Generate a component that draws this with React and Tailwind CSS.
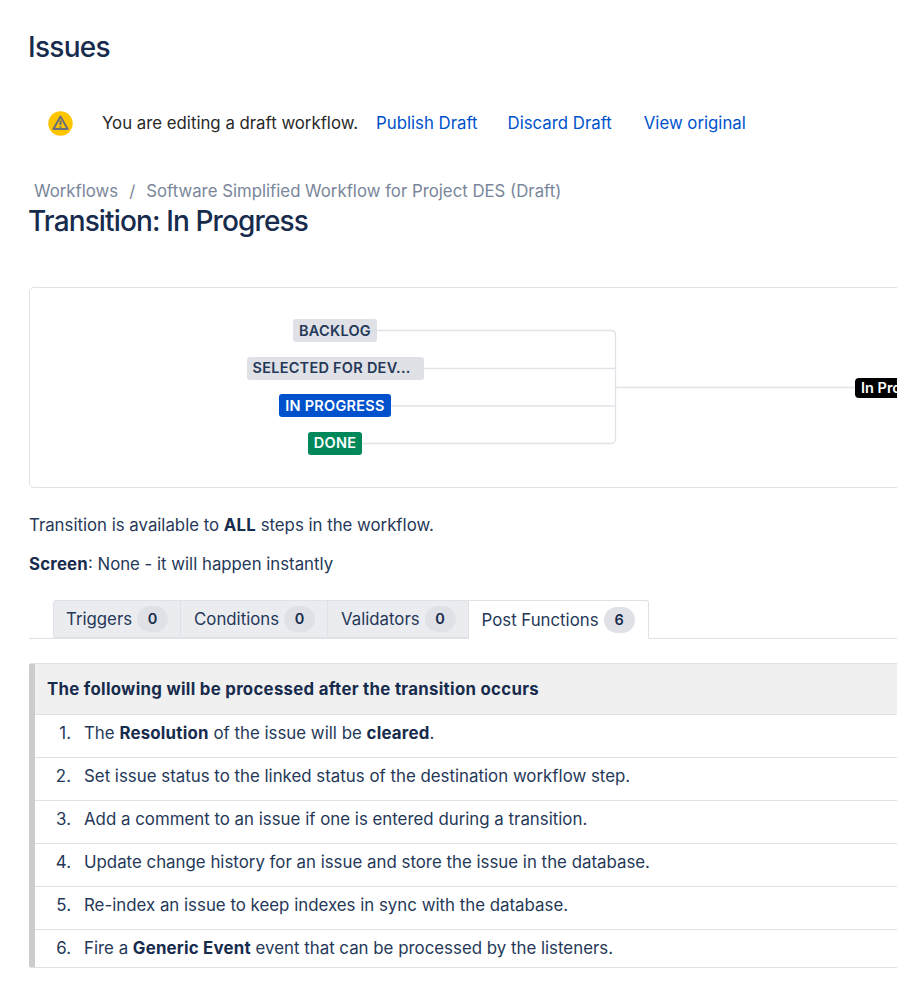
import React from 'react';

const tabs = [
  { name: 'Triggers', count: 0 },
  { name: 'Conditions', count: 0 },
  { name: 'Validators', count: 0 },
];

const Count = ({ value }) => (
  <span className="w-[31px] h-[26px] rounded-full bg-[#dfe1e6] flex items-center justify-center text-[14.5px] font-semibold text-[#172b4d]">{value}</span>
);

const Tab = ({ name, count }) => (
  <div className="h-[38px] flex items-center gap-[5px] pl-[13px] pr-[12px] first:pl-[12px] bg-[#ebecf0] border border-[#dfe1e6] border-l-0 first:border-l first:rounded-tl-[3px] text-[#253858]">
    <span className="pt-[2px]">{name}</span>
    <Count value={count} />
  </div>
);

const Strong = ({ children }) => (
  <b className="font-bold tracking-[0.2px] text-[#172b4d]">{children}</b>
);

const Row = ({ n, children, last }) => (
  <div className={last ? 'flex items-center h-[37px] text-[16.85px] text-[#253858]' : 'flex items-center h-[43px] pb-[4px] text-[16.85px] text-[#253858] border-b border-[#dfe1e6]'}>
    <span className="w-[36px] text-right shrink-0">{n}.</span>
    <span className="ml-[13px]">{children}</span>
  </div>
);

const StatusBadge = ({ className, children }) => (
  <span className={`relative h-[23px] flex items-center px-[6px] rounded-[3px] text-[14.5px] font-semibold tracking-[0.25px] ${className}`}>
    {children}
  </span>
);

export default function App() {
  return (
    <div className="w-[897px] h-[998px] overflow-hidden bg-white text-[16.8px] font-['Inter','Liberation_Sans',sans-serif]">
      <div className="pl-[29px]">
        <h1 className="-ml-px pt-[30px] text-[28px] leading-[35px] font-medium tracking-[-0.7px] text-[#172b4d]">Issues</h1>

        <div className="flex items-center mt-[28px] h-[60px] text-[#292929]">
          <svg width="25" height="25" viewBox="0 0 25 25" className="ml-[19px] shrink-0">
            <circle cx="12.5" cy="12.5" r="12.2" fill="#ffc400" />
            <path d="M12.5 5.5 L19.6 18 H5.4 Z" fill="none" stroke="#6b6f7a" strokeWidth="2" strokeLinejoin="round" />
            <path d="M12.5 9.5 V14" stroke="#6b6f7a" strokeWidth="2" />
            <circle cx="12.5" cy="16" r="1.1" fill="#6b6f7a" />
          </svg>
          <span className="ml-[29px] pt-[2px]">You are editing a draft workflow.</span>
          <a className="ml-[18px] pt-[2px] text-[#0052cc]">Publish Draft</a>
          <a className="ml-[30px] pt-[2px] text-[#0052cc]">Discard Draft</a>
          <a className="ml-[32px] pt-[2px] text-[#0052cc]">View original</a>
        </div>

        <div className="mt-[26px] ml-[5px] leading-[24px] text-[#7a869a]">
          <span>Workflows</span>
          <span className="mx-[11px]">/</span>
          <span>Software Simplified Workflow for Project DES (Draft)</span>
        </div>
        <h2 className="-ml-px mt-[1px] text-[28px] leading-[35px] font-medium tracking-[-0.87px] text-[#172b4d]">Transition: In Progress</h2>

        <div className="relative mt-[48px] w-[1000px] h-[201px] border border-[#dfe1e6] rounded-[5px]">
          <svg width="900" height="200" className="absolute left-0 top-0" fill="none" stroke="#e1e3e8" strokeWidth="1.3">
            <path d="M340 42.5 H581 Q585.5 42.5 585.5 47 V151 Q585.5 155.5 581 155.5 H330" />
            <path d="M390 80.5 H585.5" />
            <path d="M360 118 H585.5" />
            <path d="M585.5 99.5 H830" />
          </svg>
          <div className="absolute left-0 top-[31px] w-[610px] flex flex-col items-center gap-[14.5px]">
            <StatusBadge className="bg-[#dfe1e6] text-[#253858]">BACKLOG</StatusBadge>
            <StatusBadge className="bg-[#dfe1e6] text-[#253858] w-[177px]">SELECTED FOR DEV...</StatusBadge>
            <StatusBadge className="bg-[#0052cc] text-white">IN PROGRESS</StatusBadge>
            <StatusBadge className="bg-[#00875a] text-white">DONE</StatusBadge>
          </div>
          <span className="absolute left-[825px] top-[90px] h-[20px] flex items-center px-[6px] rounded-[4px] bg-black text-white text-[14.5px] font-semibold">In Progress</span>
        </div>

        <p className="mt-[25px] leading-[24px] text-[#253858]">Transition is available to <Strong>ALL</Strong> steps in the workflow.</p>
        <p className="mt-[15px] leading-[24px] text-[#253858]"><Strong>Screen</Strong>: None - it will happen instantly</p>

        <div className="mt-[24px] flex h-[39px] pl-[24px] border-b border-[#dfe1e6]">
          {tabs.map((t) => <Tab key={t.name} name={t.name} count={t.count} />)}
          <div className="h-[39px] flex items-center gap-[5px] pl-[13px] pr-[13px] bg-white border border-l-0 border-b-0 border-[#dfe1e6] rounded-tr-[3px] text-[#253858]">
            <span className="pt-[2px]">Post Functions</span>
            <Count value={6} />
          </div>
        </div>

        <div className="mt-[24px] w-[1000px] border border-[#dfe1e6] border-l-[6px] border-l-[#ccc] rounded-[3px]">
          <div className="h-[51px] flex items-center pl-[12px] pt-[2px] bg-[#f0f0f0] border-b border-[#dfe1e6] font-bold tracking-[0.3px] text-[#172b4d]">The following will be processed after the transition occurs</div>
          <Row n={1}>The <Strong>Resolution</Strong> of the issue will be <Strong>cleared</Strong>.</Row>
          <Row n={2}>Set issue status to the linked status of the destination workflow step.</Row>
          <Row n={3}>Add a comment to an issue if one is entered during a transition.</Row>
          <Row n={4}>Update change history for an issue and store the issue in the database.</Row>
          <Row n={5}>Re-index an issue to keep indexes in sync with the database.</Row>
          <Row n={6} last>Fire a <Strong>Generic Event</Strong> event that can be processed by the listeners.</Row>
        </div>
      </div>
    </div>
  );
}
